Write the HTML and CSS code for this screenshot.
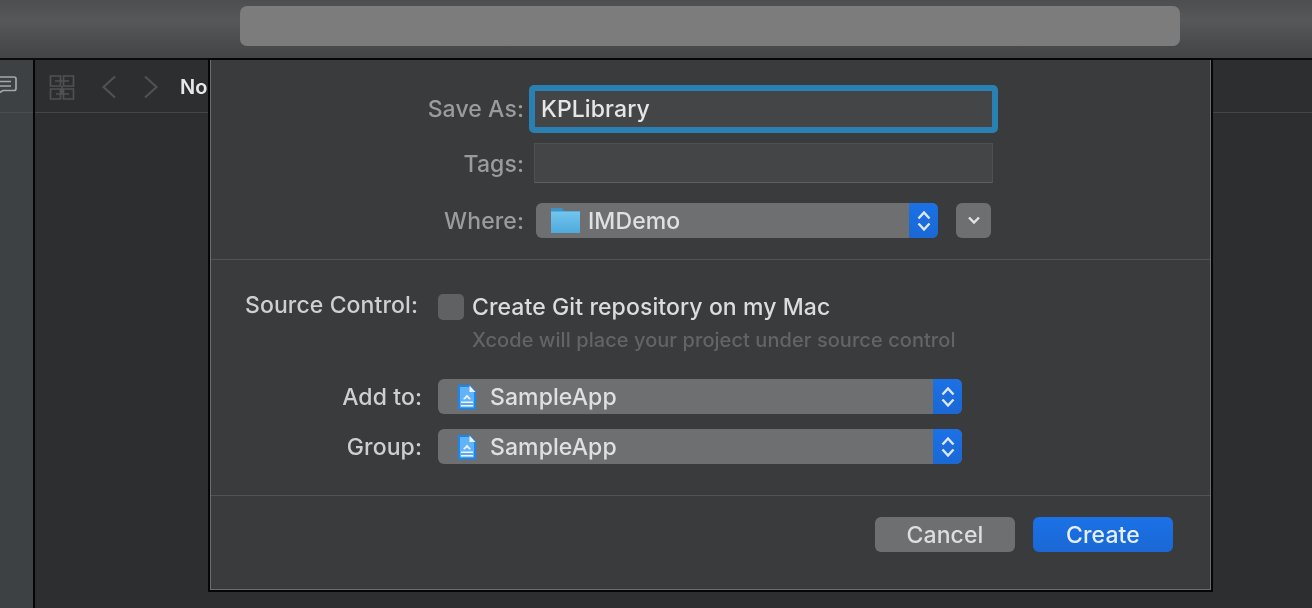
FILE: index.html
```html
<!DOCTYPE html>
<html lang="en">
<head>
<meta charset="utf-8">
<title>Save</title>
<link rel="stylesheet" href="styles.css">
</head>
<body>
<svg class="defs" width="0" height="0" aria-hidden="true">
  <symbol id="updown" viewBox="0 0 16 24">
    <path d="M2.500 9.500 8 3.500l5.500 6M2.500 14.500 8 20.500l5.500-6" fill="none" stroke="#dfe8fb" stroke-width="2.400"/>
  </symbol>
  <symbol id="doc" viewBox="0 0 20 26">
    <path d="M1 1h12l6 6.500V25.500H1z" fill="#1a86ee"/>
    <path d="M3 3h9l5 5.500V23.500H3z" fill="#62b2f6"/>
    <path d="M12.500 1.500 18.500 8h-6z" fill="#eef7ff"/>
    <path d="M6 15 10 10.500l4 4.500-1.800.4L10 13.500l-2.200 1.900z" fill="#e3f1fe"/>
    <path d="M4 17.500h12v5H4z" fill="#eaf5ff"/>
    <path d="M4 20h12" stroke="#2b8eea" stroke-width="1.300"/>
  </symbol>
</svg>
<header class="toolbar"><div class="search"></div></header>
<div class="workspace">
  <aside class="sidebar">
    <div class="side-top">
      <svg class="comment" width="18" height="22" viewBox="0 0 18 22" aria-hidden="true"><path d="M-6 2h20a2 2 0 0 1 2 2v9.500a2 2 0 0 1-2 2H3l-6 3.500M-1 6.500h12M-1 11h12" fill="none" stroke="#a5a8a9" stroke-width="1.700"/></svg>
    </div>
  </aside>
  <main class="main">
    <div class="subbar">
      <svg class="grid-icon" width="26" height="26" viewBox="0 0 26 26" aria-hidden="true"><path d="M1.500 2h10v10h-10zM14.500 2h10v10h-10zM1.500 15h10v10h-10zM14.500 15h10v10h-10zM6 7h14M13 12v8M7 20h13" fill="none" stroke="#4f5253" stroke-width="1.700"/></svg>
      <svg class="chev" width="16" height="24" viewBox="0 0 16 24" aria-hidden="true"><path d="M14 1.500 2.500 12 14 22.500" fill="none" stroke="#4f5253" stroke-width="2.200"/></svg>
      <svg class="chev" width="16" height="24" viewBox="0 0 16 24" aria-hidden="true"><path d="M2 1.500 13.500 12 2 22.500" fill="none" stroke="#4f5253" stroke-width="2.200"/></svg>
      <span class="crumb">No</span>
    </div>
  </main>
  <section class="sheet">
    <div class="section top">
      <div class="row"><label class="label wide">Save As:</label><div class="field focus">KPLibrary</div></div>
      <div class="row tags-row"><label class="label wide lift">Tags:</label><div class="field tags"></div></div>
      <div class="row where-row"><label class="label wide">Where:</label>
        <div class="select where">
          <svg class="folder" width="31" height="27" viewBox="0 0 31 27" aria-hidden="true"><defs><linearGradient id="fold" x1="0" y1="0" x2="0" y2="1"><stop offset="0" stop-color="#72c6ee"/><stop offset="1" stop-color="#4fa9dc"/></linearGradient></defs><path d="M1 1h11l2 3h16v22H1z" fill="#3e93c4"/><path d="M1 4.500h29V26H1z" fill="url(#fold)"/></svg>
          <span class="value">IMDemo</span>
          <span class="stepper"><svg width="16" height="24"><use href="#updown"/></svg></span>
        </div>
        <button class="disclosure" aria-label="Collapse"><svg width="14" height="9" viewBox="0 0 14 9" aria-hidden="true"><path d="M2 1.500 7 6.500l5-5" fill="none" stroke="#e4e4e4" stroke-width="2.400"/></svg></button>
      </div>
    </div>
    <div class="section middle">
      <div class="row"><label class="label narrow">Source Control:</label><span class="checkbox"></span><span class="check-text">Create Git repository on my Mac</span></div>
      <p class="hint">Xcode will place your project under source control</p>
      <div class="row add-row"><label class="label medium">Add to:</label>
        <div class="select long"><svg class="doc" width="20" height="26" aria-hidden="true"><use href="#doc"/></svg><span class="value">SampleApp</span><span class="stepper"><svg width="16" height="24"><use href="#updown"/></svg></span></div>
      </div>
      <div class="row group-row"><label class="label medium">Group:</label>
        <div class="select long"><svg class="doc" width="20" height="26" aria-hidden="true"><use href="#doc"/></svg><span class="value">SampleApp</span><span class="stepper"><svg width="16" height="24"><use href="#updown"/></svg></span></div>
      </div>
    </div>
    <div class="footer">
      <button class="btn">Cancel</button>
      <button class="btn primary">Create</button>
    </div>
  </section>
</div>
</body>
</html>
```
FILE: styles.css
```css
* { box-sizing: border-box; }
html, body { margin: 0; height: 608px; overflow: hidden; background: #2c2e2f; }
body {
  font-family: Inter, "Liberation Sans", sans-serif;
  font-size: 23px;
  font-weight: 500;
  letter-spacing: 0.1px;
  color: #d6d6d6;
  filter: blur(0.5px);
}
.defs { position: absolute; }

.toolbar {
  height: 60px;
  padding: 6px 132px 0 240px;
  background: linear-gradient(180deg, #4c4e4f 0%, #56585a 35%, #4a4b4c 75%, #434445 100%);
  border-bottom: 2px solid #0c0c0c;
}
.search { height: 40px; border-radius: 7px; background: #7c7c7d; }

.workspace { display: flex; height: 548px; }
.sidebar { width: 35px; background: #3e4143; border-right: 2px solid #050505; overflow: hidden; }
.side-top { height: 53px; padding-top: 15px; border-bottom: 1px solid #4a4d4f; }
.comment { display: block; }
.main { flex: 1; background: #2c2e2f; }
.subbar {
  height: 53px;
  display: flex;
  align-items: center;
  padding: 2px 0 0 14px;
  border-bottom: 1px solid #434546;
}
.chev { margin-left: 26px; }
.chev + .chev { margin-left: 26px; }
.crumb { margin-left: 21px; font-size: 20px; font-weight: 600; color: #e8e8e8; }

.sheet {
  position: absolute;
  left: 210px;
  top: 60px;
  width: 1001px;
  height: 530px;
  background: #393b3c;
  border: 1px solid #6b6d6d;
  border-top: 0;
  box-shadow: 0 0 0 2px #060606;
  display: flex;
  flex-direction: column;
}
.section { border-bottom: 1px solid #505253; }
.top { height: 200px; padding-top: 25px; }
.middle { height: 236px; padding-top: 33px; }
.row { display: flex; align-items: center; }
.label { text-align: right; flex: none; }
.wide { width: 313px; margin-right: 10px; color: #9a9b9b; }
.narrow { width: 207px; margin-right: 20px; align-self: flex-start; line-height: 24px; color: #cfcfcf; }
.medium { width: 211px; margin-right: 16px; color: #cfcfcf; }
.lift { margin-top: 2px; }

.field { background: #434546; }
.focus {
  width: 469px;
  height: 48px;
  margin-left: -5px;
  padding-left: 6px;
  line-height: 36px;
  color: #e6e6e6;
  border: 6px solid #2a7fb3;
  border-radius: 5px;
}
.tags-row { margin-top: 10px; }
.tags { width: 459px; height: 40px; border: 1px solid #4e5051; border-bottom-color: #5c5e5f; }
.where-row { margin-top: 20px; }

.select {
  display: flex;
  align-items: center;
  height: 35px;
  border-radius: 6px;
  background: #6e6f70;
  color: #e0e0e0;
  overflow: hidden;
}
.where { width: 402px; margin-left: 2px; padding-left: 14px; }
.long { width: 524px; padding-left: 19px; }
.value { flex: 1; }
.where .value { margin-left: 7px; }
.long .value { margin-left: 13px; }
.stepper {
  width: 29px;
  height: 100%;
  background: linear-gradient(180deg, #1b71e6, #1a68d4);
  display: flex;
  align-items: center;
  justify-content: center;
}
.disclosure {
  width: 35px;
  height: 35px;
  margin-left: 18px;
  padding: 0;
  border: 0;
  border-radius: 6px;
  background: #6e6f70;
  display: flex;
  align-items: center;
  justify-content: center;
}
.checkbox { width: 26px; height: 26px; border-radius: 5px; background: #606162; }
.check-text { margin-left: 8px; color: #dcdcdc; }
.hint { margin: 9px 0 0 261px; height: 20px; line-height: 20px; font-size: 20px; letter-spacing: 0.06px; color: #626465; }
.add-row { margin-top: 29px; }
.group-row { margin-top: 15px; }

.footer { flex: 1; display: flex; justify-content: flex-end; gap: 18px; padding: 21px 37px 0 0; }
.btn {
  width: 140px;
  height: 35px;
  padding: 0;
  border: 0;
  border-radius: 6px;
  background: #6e6f70;
  color: #dedede;
  font: inherit;
  letter-spacing: inherit;
}
.primary { background: linear-gradient(180deg, #1b71e6, #1a68d4); color: #e6effc; }
```
